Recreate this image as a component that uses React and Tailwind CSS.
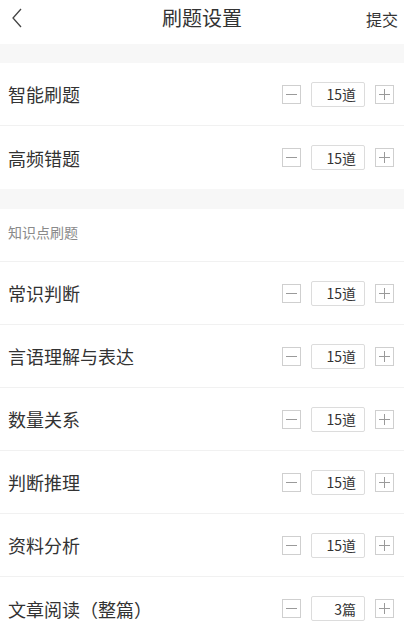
import React from "react";

function Stepper({ value }) {
  return (
    <div className="flex items-center">
      <div className="w-[19px] h-[19px] border border-[#cfcfcf] flex items-center justify-center">
        <div className="w-[11px] h-px bg-[#9a9a9a]" />
      </div>
      <div className="ml-[10px] w-[54px] h-[25px] border border-[#dcdcdc] rounded-[2px] flex items-center justify-end pr-[8px] text-[14px] text-[#333] leading-none">
        {value}
      </div>
      <div className="ml-[10px] w-[19px] h-[19px] border border-[#cfcfcf] relative">
        <div className="absolute left-[3px] top-[8px] w-[11px] h-px bg-[#9a9a9a]" />
        <div className="absolute left-[8px] top-[3px] w-px h-[11px] bg-[#9a9a9a]" />
      </div>
    </div>
  );
}

function Row({ label, value, last }) {
  return (
    <div
      className={`h-[63px] flex items-center justify-between pl-[8px] pr-[10px] ${
        last ? "" : "border-b border-[#f1f1f1]"
      }`}
    >
      <span className="text-[18px] text-[#333] leading-none">{label}</span>
      <Stepper value={value} />
    </div>
  );
}

export default function App() {
  return (
    <div
      className="w-[404px] h-[623px] bg-white overflow-hidden"
      style={{ fontFamily: '"Noto Sans CJK SC", "Noto Sans", sans-serif' }}
    >
      <div className="h-[44px] flex items-center justify-between pl-[10px] pr-[6px] relative">
        <svg width="14" height="20" viewBox="0 0 14 20" className="mt-[-8px]">
          <path d="M11 1 L3 10 L11 19" fill="none" stroke="#444" strokeWidth="1.3" />
        </svg>
        <span className="absolute left-0 right-0 top-[6px] text-center text-[20px] text-[#333] leading-[24px] pointer-events-none">
          刷题设置
        </span>
        <span className="text-[16px] text-[#333] leading-none mt-[-6px]">提交</span>
      </div>
      <div className="h-[19px] bg-[#f7f7f7]" />
      <Row label="智能刷题" value="15道" />
      <Row label="高频错题" value="15道" last />
      <div className="h-[20px] bg-[#f7f7f7]" />
      <div className="h-[53px] flex items-center pl-[8px] border-b border-[#f1f1f1]">
        <span className="text-[14px] text-[#8a8a8a] leading-none mt-[-6px]">知识点刷题</span>
      </div>
      <Row label="常识判断" value="15道" />
      <Row label="言语理解与表达" value="15道" />
      <Row label="数量关系" value="15道" />
      <Row label="判断推理" value="15道" />
      <Row label="资料分析" value="15道" />
      <Row label="文章阅读（整篇）" value="3篇" last />
    </div>
  );
}
